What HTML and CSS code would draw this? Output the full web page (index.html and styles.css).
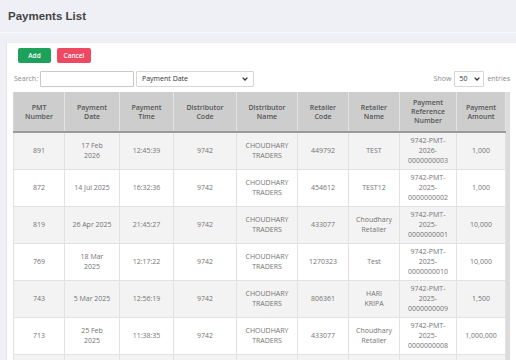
FILE: index.html
```html
<!DOCTYPE html>
<html>
<head>
<meta charset="utf-8">
<link rel="stylesheet" href="styles.css">
</head>
<body>
<div class="topbar"><h1 class="title">Payments List</h1></div>
<div class="page">
  <div class="card">
    <div class="actions">
      <button class="btn btn-add">Add</button>
      <button class="btn btn-cancel">Cancel</button>
    </div>
    <div class="controls">
      <div class="left-ctrl">
        <span class="lbl">Search:</span>
        <div class="input"></div>
        <div class="select select-wide"><span>Payment Date</span><svg width="6" height="4" viewBox="0 0 6 4"><path d="M0.6 0.6 L3 3 L5.4 0.6" fill="none" stroke="#333" stroke-width="1.3"/></svg></div>
      </div>
      <div class="right-ctrl">
        <span class="lbl">Show</span>
        <div class="select select-small"><span>50</span><svg width="6" height="4" viewBox="0 0 6 4"><path d="M0.6 0.6 L3 3 L5.4 0.6" fill="none" stroke="#333" stroke-width="1.3"/></svg></div>
        <span class="lbl">entries</span>
      </div>
    </div>
    <div class="table-wrap">
      <table class="grid">
        <colgroup>
          <col style="width:51px"><col style="width:55px"><col style="width:54px"><col style="width:63px"><col style="width:61px"><col style="width:51px"><col style="width:51px"><col style="width:57px"><col style="width:49px">
        </colgroup>
        <thead>
          <tr>
            <th>PMT<br>Number</th><th>Payment<br>Date</th><th>Payment<br>Time</th><th>Distributor<br>Code</th><th>Distributor<br>Name</th><th>Retailer<br>Code</th><th>Retailer<br>Name</th><th>Payment<br>Reference<br>Number</th><th>Payment<br>Amount</th>
          </tr>
        </thead>
        <tbody>
          <tr><td>891</td><td>17 Feb<br>2026</td><td>12:45:39</td><td>9742</td><td>CHOUDHARY<br>TRADERS</td><td>449792</td><td>TEST</td><td>9742-PMT-<br>2026-<br>0000000003</td><td>1,000</td></tr>
          <tr><td>872</td><td>14 Jul 2025</td><td>16:32:36</td><td>9742</td><td>CHOUDHARY<br>TRADERS</td><td>454612</td><td>TEST12</td><td>9742-PMT-<br>2025-<br>0000000002</td><td>1,000</td></tr>
          <tr><td>819</td><td>26 Apr 2025</td><td>21:45:27</td><td>9742</td><td>CHOUDHARY<br>TRADERS</td><td>433077</td><td>Choudhary<br>Retailer</td><td>9742-PMT-<br>2025-<br>0000000001</td><td>10,000</td></tr>
          <tr><td>769</td><td>18 Mar<br>2025</td><td>12:17:22</td><td>9742</td><td>CHOUDHARY<br>TRADERS</td><td>1270323</td><td>Test</td><td>9742-PMT-<br>2025-<br>0000000010</td><td>10,000</td></tr>
          <tr><td>743</td><td>5 Mar 2025</td><td>12:56:19</td><td>9742</td><td>CHOUDHARY<br>TRADERS</td><td>806361</td><td>HARI<br>KRIPA</td><td>9742-PMT-<br>2025-<br>0000000009</td><td>1,500</td></tr>
          <tr><td>713</td><td>25 Feb<br>2025</td><td>11:38:35</td><td>9742</td><td>CHOUDHARY<br>TRADERS</td><td>433077</td><td>Choudhary<br>Retailer</td><td>9742-PMT-<br>2025-<br>0000000008</td><td>1,000,000</td></tr>
          <tr class="partial"><td></td><td></td><td></td><td></td><td></td><td></td><td></td><td></td><td></td></tr>
        </tbody>
      </table>
    </div>
  </div>
</div>
</body>
</html>
```
FILE: styles.css
```css
html, body {
  margin: 0;
  padding: 0;
  background: #eff0f5;
  height: 360px;
  overflow: hidden;
}
body {
  font-family: "Open Sans", "Liberation Sans", sans-serif;
}
.topbar {
  height: 32px;
  display: flex;
  align-items: center;
  padding-left: 8px;
  background: #eff0f6;
  border-bottom: 1px solid #fafbfd;
}
.title {
  margin: 0;
  font-family: "Liberation Sans", Arial, sans-serif;
  font-size: 11.5px;
  font-weight: 700;
  color: #444;
}
.page {
  padding: 9px 0 0 6px;
}
.card {
  background: #fff;
  border-left: 1px solid #e4e5ea;
  border-top: 1px solid #eceef2;
  padding: 5px 6px 0 6px;
  height: 330px;
}
.actions {
  display: flex;
  gap: 6px;
  padding-left: 5px;
}
.btn {
  border: none;
  border-radius: 2px;
  height: 15px;
  width: 34px;
  padding: 0;
  color: #fff;
  font-family: "Open Sans", sans-serif;
  font-size: 6.5px;
  font-weight: 600;
}
.btn-add {
  background: #1ea25b;
  width: 33px;
}
.btn-cancel {
  background: #ee4863;
}
.controls {
  display: flex;
  justify-content: space-between;
  align-items: center;
  margin-top: 8px;
  height: 15px;
}
.left-ctrl, .right-ctrl {
  display: flex;
  align-items: center;
}
.lbl {
  font-size: 7px;
  color: #8a8a8a;
}
.left-ctrl .lbl {
  margin-left: 1px;
  margin-right: 2px;
}
.input {
  width: 92px;
  height: 14px;
  border: 1px solid #c9c9c9;
  border-radius: 1px;
  margin-right: 2px;
}
.select {
  height: 14px;
  border: 1px solid #d6d6d6;
  border-radius: 1px;
  display: flex;
  align-items: center;
  justify-content: space-between;
  font-size: 7px;
  color: #333;
  box-sizing: content-box;
}
.select-wide {
  width: 106px;
  padding: 0 5px 0 5px;
}
.select-small {
  width: 21px;
  padding: 0 3px 0 4px;
  margin: 0 3px 0 3px;
}
.table-wrap {
  margin-top: 6px;
  display: flex;
  border-right: 4px solid #dcdcdc;
  padding-right: 1px;
  width: 492px;
}
.grid {
  border-collapse: collapse;
  table-layout: fixed;
  width: 492px;
}
.grid th {
  background: #cdcdcd;
  color: #555;
  font-weight: 600;
  font-size: 7px;
  line-height: 9px;
  height: 27px;
  padding: 6px 2px;
  border-left: 1px solid #e3e3e3;
  border-right: 1px solid #e3e3e3;
  border-bottom: 2px solid #9a9a9a;
  white-space: nowrap;
}
.grid th:first-child {
  border-left: 1px solid #d6d6d6;
}
.grid td {
  text-align: center;
  vertical-align: middle;
  font-size: 7px;
  line-height: 10px;
  color: #747474;
  padding: 3px 2px;
  border: 1px solid #e2e2e2;
  white-space: nowrap;
}
.grid tbody tr:nth-child(odd) td {
  background: #f3f3f3;
}
.grid tbody tr:nth-child(even) td {
  background: #fff;
}
.grid tbody tr.partial td {
  height: 30px;
}
```
